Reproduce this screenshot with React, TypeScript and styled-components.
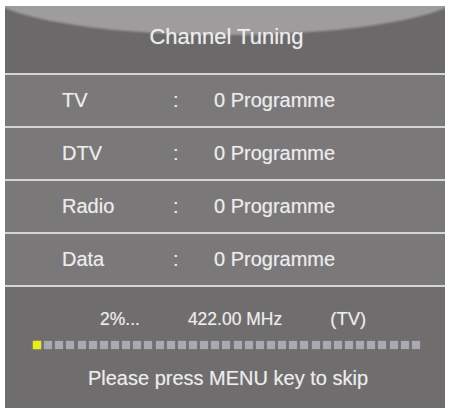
import React from "react";
import styled, { createGlobalStyle } from "styled-components";

const Global = createGlobalStyle`
  html, body { margin: 0; padding: 0; background: #ffffff; }
  body { font-family: "Liberation Sans", Arial, sans-serif; }
`;

const Page = styled.div`
  width: 451px;
  height: 414px;
  padding: 6px 0 0 5px;
  box-sizing: border-box;
`;

const Panel = styled.div`
  width: 440px;
  height: 402px;
  display: flex;
  flex-direction: column;
  background: #d4d3d4;
  box-shadow: inset -3px -2px 0 #5e5c5d;
  overflow: hidden;
`;

const Header = styled.div`
  position: relative;
  height: 67px;
  flex: none;
  background: #6b696a;
  overflow: hidden;
  display: flex;
  justify-content: center;
  padding-top: 18px;
  box-sizing: border-box;
  &::before {
    content: "";
    position: absolute;
    left: -20px;
    top: -61px;
    width: 480px;
    height: 90px;
    border-radius: 50%;
    background: #9e9c9d;
    filter: blur(1px);
  }
`;

const Title = styled.div`
  position: relative;
  font-size: 22px;
  line-height: 25px;
  color: #ececec;
  padding-left: 3px;
  text-shadow: 0 0 1px rgba(255, 255, 255, 0.5);
`;

const Divider = styled.div`
  height: 2px;
  flex: none;
  background: #d6d5d6;
`;

const Row = styled.div`
  height: 51px;
  flex: none;
  background: #7a7879;
  display: grid;
  grid-template-columns: 111px 41px 1fr;
  align-items: center;
  padding-left: 57px;
  font-size: 20px;
  color: #ececec;
  text-shadow: 0 0 1px rgba(255, 255, 255, 0.4);
`;

const Cell = styled.span``;

const Bottom = styled.div`
  flex: 1;
  background: #6f6d6e;
  display: flex;
  flex-direction: column;
  padding-top: 22px;
  box-sizing: border-box;
  color: #ececec;
  text-shadow: 0 0 1px rgba(255, 255, 255, 0.4);
`;

const Info = styled.div`
  display: flex;
  gap: 48px;
  padding-left: 95px;
  font-size: 17.5px;
  line-height: 20px;
`;

const InfoTag = styled.span`
  font-size: 18.5px;
`;

const Bar = styled.div`
  display: flex;
  justify-content: space-between;
  width: 387px;
  margin: 12px 0 0 28px;
`;

const Square = styled.div<{ $on?: boolean }>`
  width: 8px;
  height: 8px;
  background: ${(p) => (p.$on ? "#e4ee22" : "#a9a9b3")};
  box-shadow: ${(p) => (p.$on ? "0 0 2px #e4ee22" : "0 0 1px #9a9aa4")};
`;

const Skip = styled.div`
  margin-top: 18px;
  text-align: center;
  font-size: 20px;
  line-height: 23px;
  padding-left: 6px;
`;

const rows = ["TV", "DTV", "Radio", "Data"];

export default function App() {
  return (
    <>
      <Global />
      <Page>
        <Panel>
          <Header>
            <Title>Channel Tuning</Title>
          </Header>
          {rows.map((r) => (
            <React.Fragment key={r}>
              <Divider />
              <Row>
                <Cell>{r}</Cell>
                <Cell>:</Cell>
                <Cell>0 Programme</Cell>
              </Row>
            </React.Fragment>
          ))}
          <Divider />
          <Bottom>
            <Info>
              <span>2%...</span>
              <span>422.00 MHz</span>
              <InfoTag>(TV)</InfoTag>
            </Info>
            <Bar>
              {Array.from({ length: 35 }).map((_, i) => (
                <Square key={i} $on={i === 0} />
              ))}
            </Bar>
            <Skip>Please press MENU key to skip</Skip>
          </Bottom>
        </Panel>
      </Page>
    </>
  );
}
